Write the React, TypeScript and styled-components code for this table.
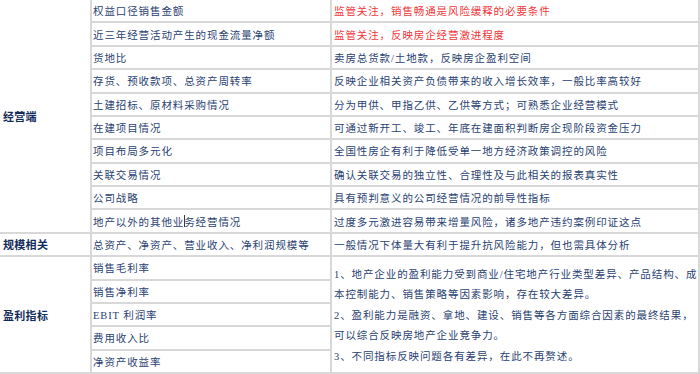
import styled, { createGlobalStyle } from "styled-components";

const GlobalStyle = createGlobalStyle`
  html, body {
    margin: 0;
    padding: 0;
    background: #ffffff;
  }
`;

const Table = styled.div`
  display: grid;
  grid-template-columns: 90px 238px 366px;
  grid-template-rows: repeat(16, 1fr);
  gap: 2px;
  width: 700px;
  height: 374px;
  box-sizing: border-box;
  padding: 0 4px 2px 0;
  background: #d8d8d8;
  font-family: "Liberation Serif", "Noto Sans CJK SC", serif;
  font-size: 10.5px;
  letter-spacing: 0.9px;
  color: #2a4272;
  overflow: hidden;
`;

const Cell = styled.div<{ $span?: number }>`
  display: flex;
  align-items: center;
  background: #ffffff;
  padding-left: 1px;
  white-space: nowrap;
  grid-row: span ${(p) => p.$span ?? 1};
`;

const Group = styled(Cell)`
  grid-column: 1;
  padding-left: 3px;
  font-weight: 700;
  font-size: 11px;
  letter-spacing: 0.3px;
  color: #142c5c;
`;

const Metric = styled(Cell)`
  grid-column: 2;
`;

const Note = styled(Cell)<{ $alert?: boolean }>`
  grid-column: 3;
  padding-left: 2px;
  color: ${(p) => (p.$alert ? "#f2363a" : "#2a4272")};
`;

const Summary = styled(Note)`
  flex-direction: column;
  align-items: stretch;
  justify-content: center;
  white-space: normal;
  line-height: 20.5px;
  padding-top: 3px;
`;

const Para = styled.p`
  margin: 0;
`;

const Caret = styled.span`
  display: inline-block;
  width: 1px;
  height: 12px;
  margin: 0 -1px 0 0;
  background: #3a3a3a;
  vertical-align: middle;
`;

type Row = { metric: string; note: string; alert?: boolean };

const operations: Row[] = [
  { metric: "权益口径销售金额", note: "监管关注，销售畅通是风险缓释的必要条件", alert: true },
  { metric: "近三年经营活动产生的现金流量净额", note: "监管关注，反映房企经营激进程度", alert: true },
  { metric: "货地比", note: "卖房总货款/土地款，反映房企盈利空间" },
  { metric: "存货、预收款项、总资产周转率", note: "反映企业相关资产负债带来的收入增长效率，一般比率高较好" },
  { metric: "土建招标、原材料采购情况", note: "分为甲供、甲指乙供、乙供等方式；可熟悉企业经营模式" },
  { metric: "在建项目情况", note: "可通过新开工、竣工、年底在建面积判断房企现阶段资金压力" },
  { metric: "项目布局多元化", note: "全国性房企有利于降低受单一地方经济政策调控的风险" },
  { metric: "关联交易情况", note: "确认关联交易的独立性、合理性及与此相关的报表真实性" },
  { metric: "公司战略", note: "具有预判意义的公司经营情况的前导性指标" },
];

const profitMetrics = ["销售毛利率", "销售净利率", "EBIT 利润率", "费用收入比", "净资产收益率"];

const App = () => {
  return (
    <>
      <GlobalStyle />
      <Table>
        <Group $span={10}>经营端</Group>
        {operations.map((row) => (
          <Row key={row.metric} row={row} />
        ))}
        <Metric>
          地产以外的其他业<Caret />务经营情况
        </Metric>
        <Note>过度多元激进容易带来增量风险，诸多地产违约案例印证这点</Note>

        <Group>规模相关</Group>
        <Metric>总资产、净资产、营业收入、净利润规模等</Metric>
        <Note>一般情况下体量大有利于提升抗风险能力，但也需具体分析</Note>

        <Group $span={5}>盈利指标</Group>
        <Metric>{profitMetrics[0]}</Metric>
        <Summary $span={5}>
          <Para>
            1、地产企业的盈利能力受到商业/住宅地产行业类型差异、产品结构、成本控制能力、销售策略等因素影响，存在较大差异。
          </Para>
          <Para>
            2、盈利能力是融资、拿地、建设、销售等各方面综合因素的最终结果，可以综合反映房地产企业竞争力。
          </Para>
          <Para>3、不同指标反映问题各有差异，在此不再赘述。</Para>
        </Summary>
        {profitMetrics.slice(1).map((m) => (
          <Metric key={m}>{m}</Metric>
        ))}
      </Table>
    </>
  );
};

const Row = ({ row }: { row: Row }) => (
  <>
    <Metric>{row.metric}</Metric>
    <Note $alert={row.alert}>{row.note}</Note>
  </>
);

export default App;
